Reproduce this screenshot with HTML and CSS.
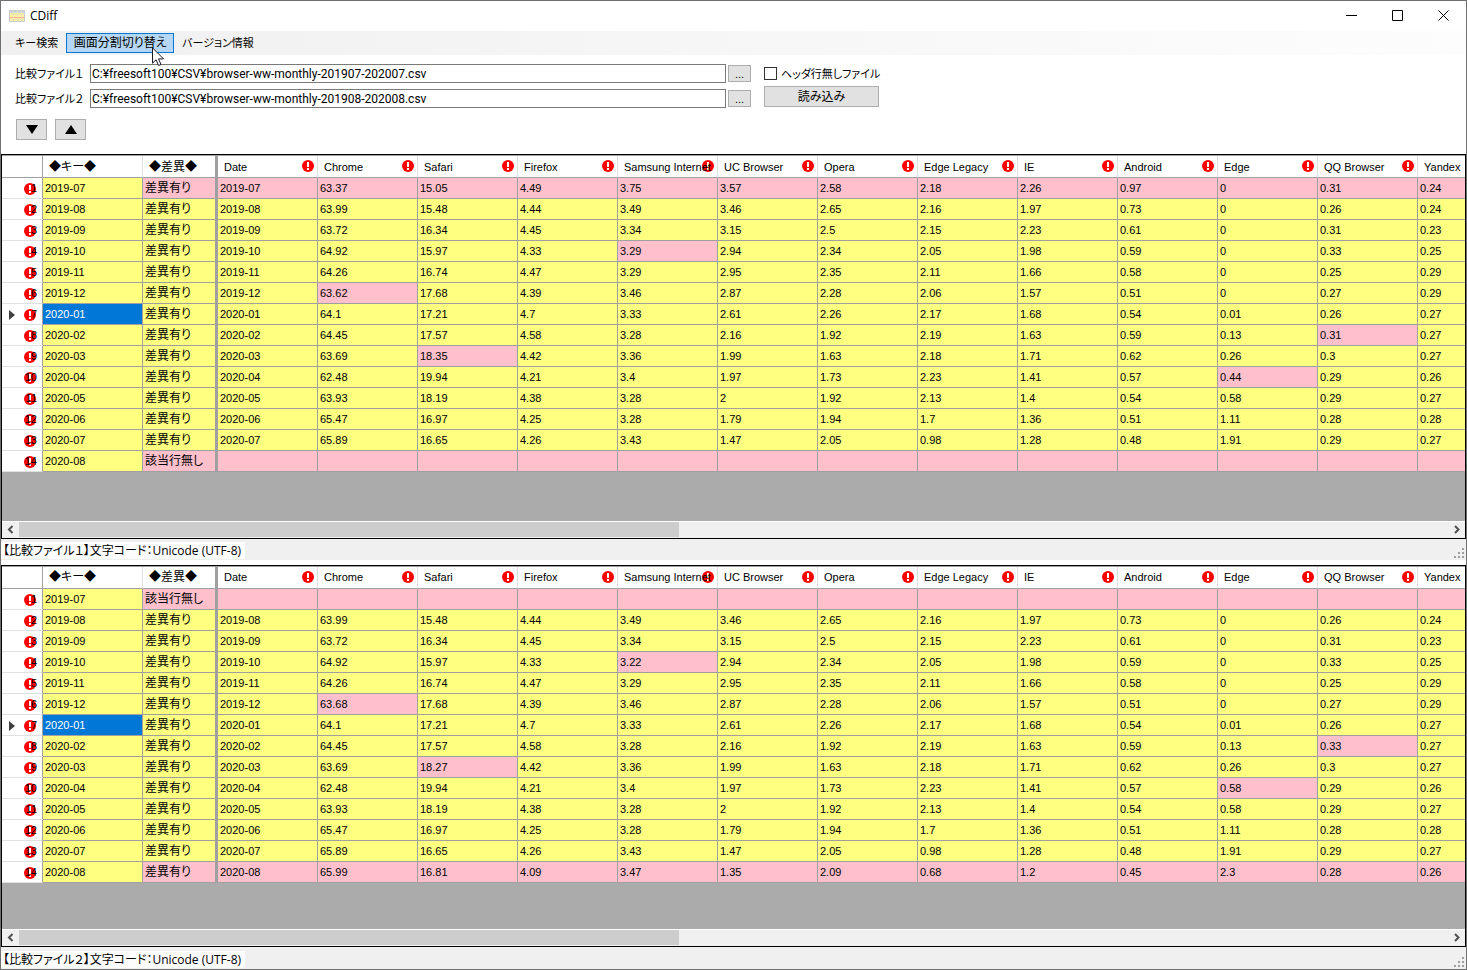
FILE: index.html
```html
<!DOCTYPE html>
<html lang="ja">
<head>
<meta charset="utf-8">
<title>CDiff</title>
<link rel="stylesheet" href="styles.css">
</head>
<body>
<div class="window">
  <header class="titlebar">
    <svg class="app-icon" width="16" height="12" viewBox="0 0 16 12"><rect x=".5" y=".5" width="15" height="11" fill="#fff6a0" stroke="#c9cdd2"/><path d="M1 1h14v2H1z" fill="#c5d4e2"/><path d="M1 7h14v1H1z" fill="#ff9f95"/><path d="M1 4.500h14M1 9.500h14M4.500 1v10M8.500 1v10M12.500 1v10" stroke="#eadfb5" fill="none"/></svg>
    <h1 class="app-title">CDiff</h1>
    <div class="window-buttons">
      <button class="window-button" aria-label="最小化"><svg width="11" height="11"><path d="M0 5.5h11" stroke="#000"/></svg></button>
      <button class="window-button" aria-label="最大化"><svg width="11" height="11"><path d="M.5.5h10v10H.5z" stroke="#000" fill="none"/></svg></button>
      <button class="window-button" aria-label="閉じる"><svg width="11" height="11"><path d="M.5.5l10 10M10.5.5l-10 10" stroke="#000" fill="none"/></svg></button>
    </div>
  </header>
  <nav class="menubar">
    <button class="menu-item menu-small">キー検索</button>
    <button class="menu-item menu-active">画面分割切り替え
      <svg class="pointer" width="13" height="20" viewBox="0 0 13 20"><path d="M.5.8v15.400l3.600-3.400 2.500 5.700 2.400-1-2.500-5.600h5z" fill="#fff" stroke="#1b1b26"/></svg>
    </button>
    <button class="menu-item menu-small">バージョン情報</button>
  </nav>
  <section class="controls">
    <div class="form">
      <div class="files">
        <label for="file1">比較ファイル１</label>
        <input class="path" id="file1" type="text" value="C:¥freesoft100¥CSV¥browser-ww-monthly-201907-202007.csv">
        <button class="button browse">...</button>
        <label for="file2">比較ファイル２</label>
        <input class="path" id="file2" type="text" value="C:¥freesoft100¥CSV¥browser-ww-monthly-201908-202008.csv">
        <button class="button browse">...</button>
      </div>
      <div class="options">
        <label class="check"><input type="checkbox">ヘッダ行無しファイル</label>
        <button class="button load">読み込み</button>
      </div>
    </div>
    <div class="jumps">
      <button class="button jump" aria-label="次の差異"><svg width="12" height="9"><path d="M0 0h12L6 9z"/></svg></button>
      <button class="button jump" aria-label="前の差異"><svg width="12" height="9"><path d="M6 0l6 9H0z"/></svg></button>
    </div>
  </section>
  <main class="panes">
    <section class="pane pane-first">
      <div class="grid">
        <div class="view"><table id="table1"></table></div>
        <div class="scrollbar"><svg width="17" height="16"><path d="M10.500 4L7 7.500l3.500 3.500" class="chevron"/></svg><div class="track"><div class="thumb"></div></div><svg width="17" height="16"><path d="M7 4l3.500 3.500L7 11" class="chevron"/></svg></div>
      </div>
      <footer class="status"><span class="status-text">【比較ファイル１】文字コード：Unicode (UTF-8)</span><svg class="grip" width="11" height="11"><path d="M8 0h2v2H8zM8 4h2v2H8zM4 4h2v2H4zM8 8h2v2H8zM4 8h2v2H4zM0 8h2v2H0z"/></svg></footer>
    </section>
    <section class="pane pane-second">
      <div class="grid">
        <div class="view"><table id="table2"></table></div>
        <div class="scrollbar"><svg width="17" height="16"><path d="M10.500 4L7 7.500l3.500 3.500" class="chevron"/></svg><div class="track"><div class="thumb"></div></div><svg width="17" height="16"><path d="M7 4l3.500 3.500L7 11" class="chevron"/></svg></div>
      </div>
      <footer class="status"><span class="status-text">【比較ファイル２】文字コード：Unicode (UTF-8)</span><svg class="grip" width="11" height="11"><path d="M8 0h2v2H8zM8 4h2v2H8zM4 4h2v2H4zM8 8h2v2H8zM4 8h2v2H4zM0 8h2v2H0z"/></svg></footer>
    </section>
  </main>
</div>
<script src="app.js"></script>
</body>
</html>
```
FILE: styles.css
```css
* { box-sizing: border-box; }
body {
  margin: 0;
  background: #fff;
  color: #000;
  font: 12px/16px "Liberation Sans", "Noto Sans CJK JP", sans-serif;
  font-feature-settings: "palt";
}
button, input { font: inherit; font-feature-settings: inherit; color: inherit; margin: 0; }
svg { display: block; flex: none; }
.window {
  display: flex;
  flex-direction: column;
  min-height: 100vh;
  border: 1px solid #707070;
}
.titlebar { display: flex; align-items: center; height: 29px; padding-left: 8px; margin-bottom: 1px; }
.app-title { margin: 0 0 0 5px; font: 12px/16px "Open Sans", sans-serif; }
.window-buttons { display: flex; margin-left: auto; }
.window-button {
  display: flex;
  align-items: center;
  justify-content: center;
  width: 46px;
  height: 28px;
  padding: 0;
  border: 0;
  background: none;
}
.menubar {
  display: flex;
  align-items: center;
  height: 24px;
  padding-left: 6px;
  background: linear-gradient(90deg, #f0f0f0, #fdfdfd);
}
.menu-item {
  position: relative;
  height: 20px;
  padding: 0 7px;
  border: 1px solid transparent;
  background: none;
  line-height: 18px;
  white-space: nowrap;
}
.menu-small { font-size: 11px; }
.menu-active { width: 108px; padding: 0; background: #b5d7f3; border-color: #0078d7; }
.pointer { position: absolute; left: 85px; top: 13px; z-index: 2; }
.controls { padding: 9px 14px 14px; }
.form { display: flex; gap: 13px; font-size: 11px; }
.files {
  display: grid;
  grid-template-columns: 75px minmax(200px, 636px) 25px;
  grid-auto-rows: 19px;
  row-gap: 6px;
  align-items: center;
  flex: 0 1 736px;
}
.path {
  width: 100%;
  height: 19px;
  padding: 0 1px;
  border: 1px solid #7a7a7a;
  background: #fff;
  font-family: Roboto, "Noto Sans CJK JP", sans-serif;
  font-size: 12px;
}
.button { padding: 0; border: 1px solid #adadad; background: #e1e1e1; }
.browse { height: 17px; margin-left: 2px; line-height: 14px; }
.options { display: flex; flex-direction: column; gap: 3px; }
.check { display: flex; align-items: center; gap: 4px; height: 19px; }
.check input { appearance: none; width: 13px; height: 13px; border: 1px solid #333; background: #fff; }
.load { width: 115px; height: 21px; font-size: 12px; line-height: 18px; }
.jumps { display: flex; gap: 8px; margin: 11px 0 0 1px; }
.jump { display: flex; justify-content: center; align-items: center; width: 31px; height: 21px; }
.panes { display: flex; flex-direction: column; flex: 1; }
.pane { display: flex; flex-direction: column; }
.pane-first { flex: 410 1 0; }
.pane-second { flex: 404 1 0; }
.grid {
  display: flex;
  flex-direction: column;
  flex: 1;
  min-width: 0;
  border: 1px solid #000;
  background: #ababab;
}
.view { flex: 1; width: 100%; overflow: hidden; contain: inline-size; border-top: 1px solid #a0a0a0; }
table { width: 1516px; table-layout: fixed; border-collapse: separate; border-spacing: 0; }
.col-number { width: 41px; }
.col-status { width: 75px; }
th, td {
  position: relative;
  height: 21px;
  padding: 0 2px;
  border: solid #a0a0a0;
  border-width: 0 1px 1px 0;
  font-size: 11px;
  font-weight: 400;
  line-height: 18px;
  text-align: left;
  white-space: nowrap;
}
td { background: #ffff80; }
thead th { height: 22px; padding: 0 6px; border-right-color: #e0e0e0; background: #fff; }
tbody th { padding: 0 5px; border-bottom-color: #e0e0e0; background: #fff; text-align: right; }
.number, thead th:first-child { border-right-color: #a0a0a0; }
.frozen, thead .frozen { border-right: 3px solid #a0a0a0; }
.word { font-size: 12px; }
.diff { background: #ffc0cb; }
.selected { background: #0078d7; color: #fff; }
.text { position: relative; z-index: 1; }
.alert { position: absolute; right: 3px; top: 4px; }
.number .alert { right: 6px; top: 5px; }
.current { position: absolute; left: 7px; top: 6px; }
.scrollbar { display: flex; height: 17px; border-top: 1px solid #fff; background: #f0f0f0; }
.track { flex: 1; }
.thumb { width: 46.2%; height: 15px; background: #cdcdcd; }
.chevron { fill: none; stroke: #505050; stroke-width: 2; }
.status { display: flex; align-items: center; height: 22px; padding-top: 2px; background: #f0f0f0; }
.pane-first .status { height: 21px; margin-bottom: 5px; }
.status-text {
  height: 17px;
  padding: 0 4px 0 2px;
  background: #fdfdfd;
  font-family: "Open Sans", "Noto Sans CJK JP", sans-serif;
  font-size: 12px;
  line-height: 18px;
}
.grip { margin: 6px 1px 0 auto; fill: #a0a0a0; }
```
FILE: app.js
```javascript
const columns = ["Date", "Chrome", "Safari", "Firefox", "Samsung Internet", "UC Browser", "Opera",
  "Edge Legacy", "IE", "Android", "Edge", "QQ Browser", "Yandex"];

const shared = `2019-07 63.37 15.05 4.49 3.75 3.57 2.58 2.18 2.26 0.97 0 0.31 0.24
2019-08 63.99 15.48 4.44 3.49 3.46 2.65 2.16 1.97 0.73 0 0.26 0.24
2019-09 63.72 16.34 4.45 3.34 3.15 2.5 2.15 2.23 0.61 0 0.31 0.23
2019-10 64.92 15.97 4.33 3.29 2.94 2.34 2.05 1.98 0.59 0 0.33 0.25
2019-11 64.26 16.74 4.47 3.29 2.95 2.35 2.11 1.66 0.58 0 0.25 0.29
2019-12 63.62 17.68 4.39 3.46 2.87 2.28 2.06 1.57 0.51 0 0.27 0.29
2020-01 64.1 17.21 4.7 3.33 2.61 2.26 2.17 1.68 0.54 0.01 0.26 0.27
2020-02 64.45 17.57 4.58 3.28 2.16 1.92 2.19 1.63 0.59 0.13 0.31 0.27
2020-03 63.69 18.35 4.42 3.36 1.99 1.63 2.18 1.71 0.62 0.26 0.3 0.27
2020-04 62.48 19.94 4.21 3.4 1.97 1.73 2.23 1.41 0.57 0.44 0.29 0.26
2020-05 63.93 18.19 4.38 3.28 2 1.92 2.13 1.4 0.54 0.58 0.29 0.27
2020-06 65.47 16.97 4.25 3.28 1.79 1.94 1.7 1.36 0.51 1.11 0.28 0.28
2020-07 65.89 16.65 4.26 3.43 1.47 2.05 0.98 1.28 0.48 1.91 0.29 0.27
2020-08 65.99 16.81 4.09 3.47 1.35 2.09 0.68 1.2 0.45 2.3 0.28 0.26`.split("\n").map(line => line.split(" "));

// Row index -> [column index, value in the second file]
const changes = { 3: [4, "3.22"], 5: [1, "63.68"], 7: [11, "0.33"], 8: [2, "18.27"], 9: [10, "0.58"] };

const alertIcon = '<svg class="alert" width="12" height="12" viewBox="0 0 12 12"><circle cx="6" cy="6" r="6" fill="#f00"/><path d="M5 2h2v5H5zM5 8h2v2H5z" fill="#fff"/></svg>';
const currentIcon = '<svg class="current" width="6" height="10"><path d="M0 0l6 5-6 5z" fill="#404040"/></svg>';

function render(id, second) {
  const missing = second ? 0 : 13;
  const head = columns.map(name => `<th><span class="text">${name}</span>${name === "Yandex" ? "" : alertIcon}</th>`).join("");
  const body = shared.map((row, r) => {
    const whole = r === 0 || r === 13;
    const cells = row.map((value, c) => {
      const changed = changes[r] && changes[r][0] === c;
      const shown = r === missing ? "" : changed && second ? changes[r][1] : value;
      return `<td${whole || changed ? ' class="diff"' : ""}>${shown}</td>`;
    }).join("");
    return `<tr><th class="number">${r === 6 ? currentIcon : ""}${alertIcon}<span class="text">${r + 1}</span></th>` +
      `<td${r === 6 ? ' class="selected"' : ""}>${row[0]}</td>` +
      `<td class="word frozen${whole ? " diff" : ""}">${r === missing ? "該当行無し" : "差異有り"}</td>${cells}</tr>`;
  }).join("");
  document.getElementById(id).innerHTML =
    `<colgroup><col class="col-number"><col><col class="col-status">${"<col>".repeat(13)}</colgroup>` +
    `<thead><tr><th></th><th class="word">◆キー◆</th><th class="word frozen">◆差異◆</th>${head}</tr></thead><tbody>${body}</tbody>`;
}

render("table1", false);
render("table2", true);
```
